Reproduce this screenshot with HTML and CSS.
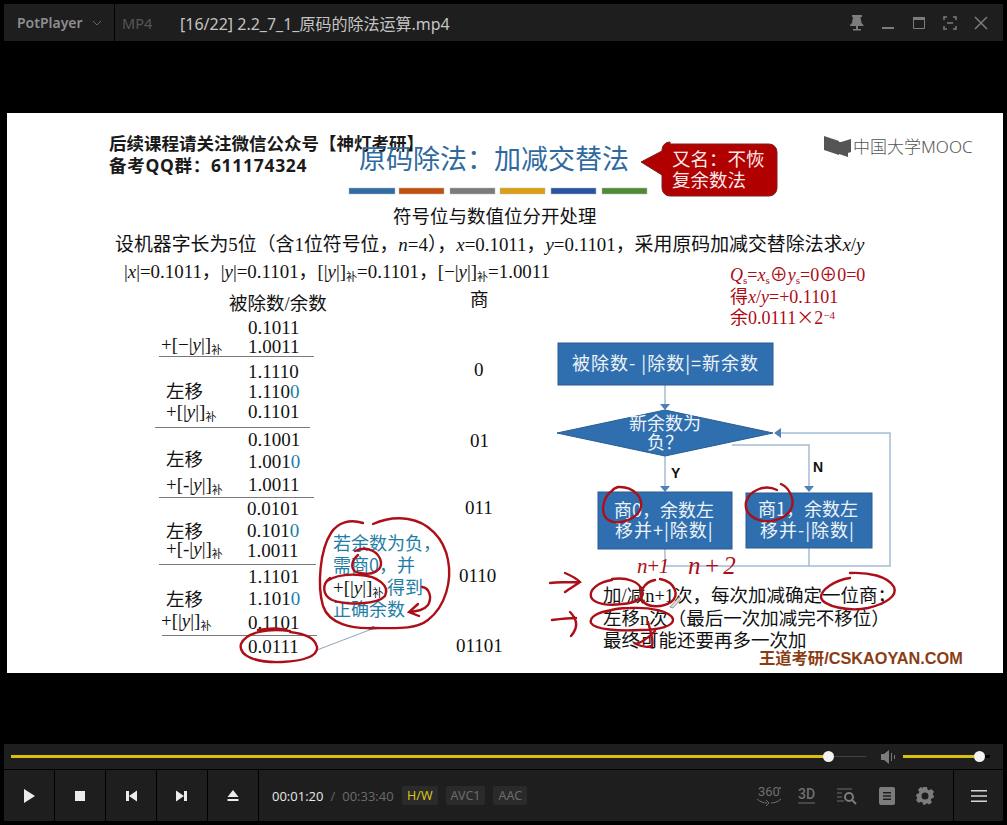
FILE: index.html
```html
<!DOCTYPE html>
<html>

<head>
    <meta charset="utf-8">
    <title>PotPlayer</title>
    <link rel="stylesheet" href="styles.css">
</head>

<body>
    <div class="titlebar">
        <div class="brand">PotPlayer
            <svg class="chevron" width="10" height="6" viewBox="0 0 10 6"><path d="M1 1l4 4 4-4" /></svg>
        </div>
        <div class="format">MP4</div>
        <div class="filename">[16/22] 2.2_7_1_原码的除法运算.mp4</div>
        <div class="win-buttons">
            <svg width="16" height="18" viewBox="0 0 16 18"><path class="fill" d="M3 1h10v2h-1.500l1 6 2 2v1H1v-1l2-2 1-6H3zM7 12h2v3h3v1.500H4V15h3z" /></svg>
            <svg width="16" height="18" viewBox="0 0 16 18"><path class="fill" d="M2 13h12v2H2z" /></svg>
            <svg width="16" height="18" viewBox="0 0 16 18"><path class="line" d="M2.500 3.500h11v11h-11z" /><path class="fill" d="M2 3h12v3H2z" /></svg>
            <svg width="16" height="18" viewBox="0 0 16 18"><path class="line thick" d="M2 6V3h3M11 3h3v3M14 12v3h-3M5 15H2v-3M5 9h6" /></svg>
            <svg width="16" height="18" viewBox="0 0 16 18"><path class="line thick" d="M2 3l12 12M14 3L2 15" /></svg>
        </div>
    </div>

    <div class="slide">
        <svg class="slide-canvas" width="996" height="560" viewBox="7 113 996 560">
            <!-- header -->
            <text class="notice" x="109" y="150">后续课程请关注微信公众号【神灯考研】</text>
            <text class="notice spaced" x="109" y="172">备考QQ群：611174324</text>
            <text class="title" x="359" y="169">原码除法：加减交替法</text>
            <rect class="bar" x="349" y="188" width="46" height="6" fill="#2f6ca6" />
            <rect class="bar" x="399" y="188" width="45" height="6" fill="#c2510f" />
            <rect class="bar" x="450" y="188" width="45" height="6" fill="#7b7b7b" />
            <rect class="bar" x="500" y="188" width="45" height="6" fill="#dd9f12" />
            <rect class="bar" x="551" y="188" width="45" height="6" fill="#2a52a2" />
            <rect class="bar" x="602" y="188" width="45" height="6" fill="#4f8b32" />

            <path class="callout" d="M670 144h99a8 8 0 0 1 8 8v36a8 8 0 0 1-8 8h-99a8 8 0 0 1-8-8v-13l-21-13 21-11v-1a8 8 0 0 1 8-8z" />
            <text class="callout-text" x="672" y="166">又名：不恢</text>
            <text class="callout-text" x="672" y="187">复余数法</text>

            <path class="mooc-icon" d="M824 136l15 5v14l-15-5zM841 142l10-3v13l-3 1v4l-9-3v-12z" />
            <text class="mooc" x="853" y="152.500">中国大学MOOC</text>

            <!-- problem -->
            <text class="body" x="393" y="223">符号位与数值位分开处理</text>
            <text class="body wide" x="115" y="251">设机器字长为5位（含1位符号位，<tspan class="em">n</tspan>=4），<tspan class="em">x</tspan>=0.1011，<tspan class="em">y</tspan>=0.1101，采用原码加减交替除法求<tspan class="em">x</tspan>/<tspan class="em">y</tspan></text>
            <text class="body wide" x="124" y="278">|<tspan class="em">x</tspan>|=0.1011，|<tspan class="em">y</tspan>|=0.1101，[|<tspan class="em">y</tspan>|]<tspan class="sub" dy="3">补</tspan><tspan dy="-3">=0.1101，[−|</tspan><tspan class="em">y</tspan>|]<tspan class="sub" dy="3">补</tspan><tspan dy="-3">=1.0011</tspan></text>

            <text class="red" x="730" y="281"><tspan class="em">Q</tspan><tspan class="sub-latin" dy="3">s</tspan><tspan dy="-3">=</tspan><tspan class="em">x</tspan><tspan class="sub-latin" dy="3">s</tspan><tspan dy="-3">⊕</tspan><tspan class="em">y</tspan><tspan class="sub-latin" dy="3">s</tspan><tspan dy="-3">=0⊕0=0</tspan></text>
            <text class="red" x="730" y="303">得<tspan class="em">x</tspan>/<tspan class="em">y</tspan>=+0.1101</text>
            <text class="red" x="730" y="324">余0.0111<tspan class="times">×</tspan>2<tspan class="sup" dy="-5">−4</tspan></text>

            <!-- division table -->
            <text class="body" x="229" y="310">被除数/余数</text>
            <text class="body" x="470" y="306">商</text>

            <text class="num" x="248" y="334">0.1011</text>
            <text class="num" x="248" y="353">1.0011</text>
            <path class="rule" d="M159 356.500h155" />
            <text class="num" x="248" y="378">1.1110</text>
            <text class="num" x="248" y="398">1.110<tspan class="teal">0</tspan></text>
            <text class="num" x="248" y="418">0.1101</text>
            <path class="rule" d="M155 427.500h155" />
            <text class="num" x="248" y="446">0.1001</text>
            <text class="num" x="248" y="468">1.001<tspan class="teal">0</tspan></text>
            <text class="num" x="248" y="491">1.0011</text>
            <path class="rule" d="M159 497.500h155" />
            <text class="num" x="247" y="515">0.0101</text>
            <text class="num" x="247" y="537">0.101<tspan class="teal">0</tspan></text>
            <text class="num" x="247" y="557">1.0011</text>
            <path class="rule" d="M159 564.500h157" />
            <text class="num" x="248" y="583">1.1101</text>
            <text class="num" x="248" y="605">1.101<tspan class="teal">0</tspan></text>
            <text class="num" x="248" y="629">0.1101</text>
            <path class="rule" d="M162 635.500h155" />
            <text class="num" x="248" y="653">0.0111</text>

            <text class="num" x="161" y="351">+[−|<tspan class="em">y</tspan>|]<tspan class="sub" dy="3">补</tspan></text>
            <text class="body" x="166" y="398">左移</text>
            <text class="num" x="166" y="418">+[|<tspan class="em">y</tspan>|]<tspan class="sub" dy="3">补</tspan></text>
            <text class="body" x="166" y="466">左移</text>
            <text class="num" x="166" y="491">+[-|<tspan class="em">y</tspan>|]<tspan class="sub" dy="3">补</tspan></text>
            <text class="body" x="166" y="538">左移</text>
            <text class="num" x="166" y="555">+[-|<tspan class="em">y</tspan>|]<tspan class="sub" dy="3">补</tspan></text>
            <text class="body" x="166" y="606">左移</text>
            <text class="num" x="161" y="627">+[|<tspan class="em">y</tspan>|]<tspan class="sub" dy="3">补</tspan></text>

            <text class="num" x="474" y="376">0</text>
            <text class="num" x="470" y="447">01</text>
            <text class="num" x="465" y="514">011</text>
            <text class="num" x="459" y="582">0110</text>
            <text class="num" x="456" y="652">01101</text>

            <!-- note -->
            <text class="note" x="333" y="550">若余数为负，</text>
            <text class="note" x="333" y="572">需商0，并</text>
            <text class="num" x="333" y="594">+[|<tspan class="em">y</tspan>|]<tspan class="sub" dy="3">补</tspan></text>
            <text class="note" x="387" y="594">得到</text>
            <text class="note" x="333" y="616">正确余数</text>
            <path class="leader" d="M317 650l55-21" />
            <path class="leader-head" d="M368 630l5-4 5 3z" />

            <!-- flowchart -->
            <path class="conn" d="M665 385v20M665 456v31M732 445h77v42M665 549v17h225V433H780M809 548v18" />
            <path class="conn-head" d="M660 404h10l-5 6zM660 486h10l-5 6zM804 486h10l-5 6zM774 433l7-5v10z" />
            <rect class="flow" x="558" y="343" width="215" height="42" />
            <path class="flow" d="M557 433l108-23 108 23-108 23z" />
            <rect class="flow" x="598" y="492" width="134" height="57" />
            <rect class="flow" x="746" y="493" width="126" height="55" />
            <text class="flow-text spread" x="665.500" y="370" text-anchor="middle">被除数- |除数|=新余数</text>
            <text class="flow-text" x="665" y="430" text-anchor="middle">新余数为</text>
            <text class="flow-text" x="665" y="449" text-anchor="middle">负？</text>
            <text class="flow-text" x="614" y="517">商0，余数左</text>
            <text class="flow-text spread" x="615" y="537">移并+|除数|</text>
            <text class="flow-text" x="758" y="516">商1，余数左</text>
            <text class="flow-text spread" x="760" y="537">移并-|除数|</text>
            <text class="yn" x="671" y="478">Y</text>
            <text class="yn" x="813" y="472">N</text>

            <!-- summary -->
            <text class="body" x="603" y="602">加/减n+1次，每次加减确定一位商；</text>
            <text class="body" x="603" y="625">左移n次（最后一次加减完不移位）</text>
            <text class="body" x="603" y="647">最终可能还要再多一次加</text>
            <text class="wangdao" x="759" y="664">王道考研/CSKAOYAN.COM</text>

            <!-- pen marks -->
            <text class="hand tight" x="637" y="573">n+1</text>
            <text class="hand loose" x="688" y="574">n+2</text>
            <path class="ink" d="M363 523C350 519 338 522 331 533C320 550 317 585 323 606C329 624 352 629 373 628C395 628 415 630 428 620C446 606 452 580 448 560C444 538 428 522 408 519C395 517 382 520 373 524" />
            <path class="ink" d="M358 555C350 562 350 572 360 573C373 576 382 570 381 562C379 552 368 545 355 551" />
            <path class="ink" d="M330 578C322 584 322 595 332 600C348 606 378 604 385 596C390 586 378 576 360 575C348 574 336 575 327 581" />
            <path class="ink" d="M422 587C430 588 432 598 428 605C424 610 418 611 410 612M418 604L409 612L419 616" />
            <path class="ink" d="M290 631C268 628 246 632 241 644C238 656 256 663 282 662C304 661 318 656 317 647C315 638 306 634 290 632M258 630C270 628 282 628 289 631" />
            <path class="ink" d="M613 490C603 496 600 512 607 519C616 526 634 521 640 510C645 498 633 486 618 487C615 488 613 489 612 491" />
            <path class="ink" d="M777 490C765 484 750 490 746 502C744 514 756 523 772 521C786 518 795 510 792 498C790 491 786 486 781 484" />
            <path class="ink" d="M550 583C560 582 570 582 580 582M565 573C572 576 577 579 580 582C574 586 569 589 565 592" />
            <path class="ink" d="M552 620C560 619 568 618 576 618M570 612C578 620 578 628 571 636" />
            <path class="ink" d="M612 580C598 582 589 590 591 597C594 604 608 606 622 604C636 603 645 598 642 590C639 582 628 577 612 579" />
            <path class="ink" d="M655 580C644 582 639 592 642 600C647 608 662 608 671 602C680 595 675 582 660 579" />
            <path class="ink" d="M850 578C835 580 820 590 821 598C824 606 848 612 868 608C885 604 898 596 894 587C888 576 868 572 850 573" />
            <path class="ink" d="M612 610C598 612 589 617 591 623C595 630 620 631 640 630C660 630 674 626 673 619C670 611 650 607 630 608C620 608 612 609 606 612" />
            <path class="ink" d="M648 622C650 630 654 640 652 646C646 648 640 646 636 644C644 642 650 636 655 631" />
            <path class="pen" d="M670 607l9-10 2 2-8 9z" />
        </svg>
    </div>

    <div class="controls">
        <div class="seek-row">
            <div class="seek-track">
                <div class="seek-fill"></div>
                <div class="knob"></div>
                <div class="seek-rest"></div>
            </div>
            <svg class="speaker" width="16" height="14" viewBox="0 0 16 14"><path d="M1 4h3l5-4v14l-5-4H1zM11 3h1v8h-1zM14 5h1v4h-1z" /></svg>
            <div class="volume-track">
                <div class="volume-fill"></div>
                <div class="knob"></div>
                <div class="volume-rest"></div>
            </div>
        </div>
        <div class="button-row">
            <div class="btn"><svg width="14" height="14" viewBox="0 0 14 14"><path d="M2 0l11 7-11 7z" /></svg></div>
            <div class="btn"><svg width="12" height="12" viewBox="0 0 12 12"><path d="M1 1h10v10H1z" /></svg></div>
            <div class="btn"><svg width="12" height="12" viewBox="0 0 12 12"><path d="M1 1h3v10H1zM4 6l8-5.500v11z" /></svg></div>
            <div class="btn"><svg width="12" height="12" viewBox="0 0 12 12"><path d="M0 .5L8 6l-8 5.500zM8 1h3v10H8z" /></svg></div>
            <div class="btn"><svg width="12" height="12" viewBox="0 0 12 12"><path d="M6 0l5.500 7H.5zM.5 9h11v2H.5z" /></svg></div>
            <div class="time"><span class="time-now">00:01:20</span><span class="time-sep">/</span><span class="time-total">00:33:40</span></div>
            <div class="tag tag-on">H/W</div>
            <div class="tag">AVC1</div>
            <div class="tag">AAC</div>
            <div class="tools">
                <svg class="tool-360" width="28" height="22" viewBox="0 0 28 22">
                    <text class="tool-label" x="3" y="11">360</text>
                    <path class="tool-line" d="M2 14c3 3 7 4 10 4M26 14c-3 3-7 4-10 4M11 15l3 3-3 3" />
                    <circle class="tool-dot" cx="25" cy="3" r="1" />
                </svg>
                <svg class="tool-3d" width="20" height="20" viewBox="0 0 20 20">
                    <text class="tool-label big" x="1" y="13">3D</text>
                    <path class="tool-line" d="M1 17h17" />
                </svg>
                <svg width="22" height="18" viewBox="0 0 22 18">
                    <path class="tool-line" d="M1 2h15M1 6h5M1 10h5M1 14h7" />
                    <circle class="tool-ring" cx="13" cy="10" r="4" />
                    <path class="tool-ring" d="M16 13l4 4" />
                </svg>
                <svg width="16" height="18" viewBox="0 0 16 18">
                    <path class="tool-solid" fill-rule="evenodd" d="M2 0h12a2 2 0 0 1 2 2v14a2 2 0 0 1-2 2H2a2 2 0 0 1-2-2V2a2 2 0 0 1 2-2zM4 5v1.500h8V5zM4 8.200v1.500h8V8.200zM4 11.400v1.500h8v-1.500z" />
                </svg>
                <svg width="18" height="18" viewBox="0 0 18 18">
                    <path class="tool-solid" fill-rule="evenodd" d="M7 0h4l.5 2.600 1.600.7L15.300 2l2.700 2.700-1.300 2.200.7 1.600L18 9v0l-.6 2-2 .4-.7 1.600 1.300 2.200-2.700 2.300-2.200-1.300-1.600.7L9 18 7 17.500l-.5-2.100-1.600-.7-2.200 1.300L0 13.300l1.300-2.200-.7-1.600L0 9l.6-2.100 2-.4.7-1.600L2 2.700 4.700 0l2 1.300zM9 5.500a3.500 3.500 0 1 0 0 7 3.500 3.500 0 0 0 0-7z" />
                </svg>
            </div>
            <div class="menu-btn">
                <svg width="16" height="14" viewBox="0 0 16 14"><path d="M0 1h16v1.500H0zM0 6.200h16v1.500H0zM0 11.500h16V13H0z" /></svg>
            </div>
        </div>
    </div>
</body>

</html>
```

FILE: styles.css
```css
body {
    margin: 0;
    padding: 4px;
    width: 999px;
    height: 817px;
    background-color: #000;
    font-family: "Noto Sans", "Noto Sans CJK SC", sans-serif;
    overflow: hidden;
}

/* title bar */
.titlebar {
    display: flex;
    align-items: center;
    height: 37px;
    background-color: #1e1e1e;
}

.brand {
    display: flex;
    align-items: center;
    gap: 9px;
    box-sizing: border-box;
    width: 111px;
    height: 100%;
    padding-left: 13px;
    border-right: 1px solid #000;
    color: #8e8e8e;
    font-size: 14px;
    font-weight: 600;
}

.chevron path {
    fill: none;
    stroke: #666;
    stroke-width: 1;
}

.format {
    width: 58px;
    padding-left: 7px;
    color: #565656;
    font-size: 14.5px;
}

.filename {
    flex: 1;
    color: #c4c4c4;
    font-size: 16px;
}

.win-buttons {
    display: flex;
    gap: 15px;
    align-items: center;
    padding-right: 14px;
}

.fill {
    fill: #7c7c7c;
}

.line {
    fill: none;
    stroke: #7c7c7c;
    stroke-width: 1;
}

.line.thick {
    stroke-width: 1.5;
}

/* slide */
.slide {
    margin: 72px 0 71px 3px;
    width: 996px;
    height: 560px;
    background-color: #fff;
}

.slide-canvas {
    display: block;
    font-family: "Liberation Serif", "Noto Sans CJK SC", serif;
}

.notice {
    font-family: "Noto Sans", "Noto Sans CJK SC", sans-serif;
    font-size: 17.500px;
    font-weight: 700;
    fill: #1a1a1a;
}

.notice.spaced {
    letter-spacing: 0.7px;
}

.title {
    font-family: "Noto Sans CJK SC", sans-serif;
    font-size: 27px;
    fill: #2f6a9f;
}

.bar {
    stroke: #b8b8b8;
    stroke-width: 0.5;
}

.callout {
    fill: #b00000;
    stroke: #7c2020;
    stroke-width: 1;
}

.callout-text {
    font-family: "Noto Sans CJK SC", sans-serif;
    font-size: 18.5px;
    fill: #fbeaea;
}

.mooc-icon {
    fill: #555;
}

.mooc {
    font-family: "Noto Sans", "Noto Sans CJK SC", sans-serif;
    font-size: 17px;
    font-weight: 300;
    fill: #555;
}

.body {
    font-size: 18.5px;
    fill: #111;
}

.body.wide {
    font-size: 18.900px;
}

.em {
    font-style: italic;
}

.sub {
    font-size: 11px;
}

.sub-latin {
    font-size: 11px;
}

.sup {
    font-size: 11px;
}

.times {
    font-family: "Noto Sans CJK SC", sans-serif;
}

.red {
    font-size: 18px;
    fill: #ad0a16;
}

.num {
    font-size: 19px;
    fill: #111;
}

.teal {
    fill: #1c7ea8;
}

.rule {
    stroke: #7a7a7a;
    stroke-width: 1;
}

.note {
    font-family: "Noto Sans CJK SC", sans-serif;
    font-size: 18px;
    fill: #1f7ea6;
}

.leader {
    stroke: #8fa3bd;
    stroke-width: 1;
}

.leader-head {
    fill: #4a6a96;
}

.conn {
    fill: none;
    stroke: #a3bdd4;
    stroke-width: 1.5;
}

.conn-head {
    fill: #4f81b5;
}

.flow {
    fill: #2f6fb0;
    stroke: #2a5d90;
    stroke-width: 1;
}

.flow-text {
    font-family: "Noto Sans CJK SC", sans-serif;
    font-size: 18px;
    fill: #eef3f8;
}

.flow-text.spread {
    letter-spacing: 1px;
}

.yn {
    font-family: "Liberation Sans", sans-serif;
    font-size: 14px;
    font-weight: 700;
    fill: #111;
}

.wangdao {
    font-family: "Liberation Sans", "Noto Sans CJK SC", sans-serif;
    font-size: 16.300px;
    font-weight: 700;
    fill: #8a3d14;
}

.hand {
    font-size: 24px;
    font-style: italic;
    fill: #ad0f18;
}

.hand.tight {
    font-size: 21px;
    letter-spacing: -1.500px;
}

.hand.loose {
    font-size: 25px;
    letter-spacing: 3px;
}

.ink {
    fill: none;
    stroke: #ad0f18;
    stroke-width: 2.4;
    stroke-linecap: round;
}

.pen {
    fill: #ddd;
    stroke: #777;
    stroke-width: 0.7;
}

/* bottom controls */
.controls {
    height: 77px;
    background-color: #1e1e1e;
}

.seek-row {
    display: flex;
    align-items: center;
    box-sizing: border-box;
    height: 26px;
    padding: 0 13px 0 7px;
    border-bottom: 1px solid #000;
}

.seek-track {
    display: flex;
    align-items: center;
    width: 857px;
}

.seek-fill {
    width: 817px;
    height: 3px;
    background-color: #d8bf12;
}

.knob {
    flex: none;
    width: 11px;
    height: 11px;
    margin-left: -5px;
    border-radius: 50%;
    background-color: #f2f2f2;
}

.seek-rest {
    flex: 1;
    height: 1px;
    background-color: #444;
}

.speaker {
    margin-left: 14px;
    fill: #7c7c7c;
}

.volume-track {
    display: flex;
    align-items: center;
    width: 87px;
    margin-left: 7px;
}

.volume-fill {
    width: 76px;
    height: 3px;
    background-color: #d8bf12;
}

.volume-rest {
    flex: 1;
    height: 3px;
    background-color: #000;
}

.button-row {
    display: flex;
    align-items: center;
    height: 51px;
}

.btn {
    display: flex;
    align-items: center;
    justify-content: center;
    box-sizing: border-box;
    width: 51px;
    height: 100%;
    border-right: 1px solid #000;
    fill: #ececec;
}

.time {
    width: 135px;
    padding-left: 13px;
    box-sizing: border-box;
    font-family: "Open Sans", sans-serif;
    font-size: 13px;
    white-space: nowrap;
}

.time-now {
    color: #e8e8e8;
}

.time-sep {
    margin: 0 7px;
    color: #666;
}

.time-total {
    color: #6c6c6c;
}

.tag {
    margin-left: 8px;
    padding: 1px 5px;
    border-radius: 2px;
    background-color: #2a2a2a;
    color: #6c6c6c;
    font-size: 12.500px;
}

.tag-on {
    margin-left: 8px;
    color: #d9c41e;
}

.tools {
    display: flex;
    flex: 1;
    align-items: center;
    justify-content: flex-end;
    gap: 21px;
    padding-right: 19px;
}

.tool-360 {
    margin-right: -7px;
}

.tool-3d {
    margin-right: -2px;
}

.tool-label {
    font-family: "Roboto", sans-serif;
    font-size: 13px;
    fill: #6e6e6e;
}

.tool-label.big {
    font-size: 14px;
    font-weight: 500;
}

.tool-line {
    fill: none;
    stroke: #6e6e6e;
    stroke-width: 1;
}

.tool-dot {
    fill: #6e6e6e;
}

.tool-ring {
    fill: none;
    stroke: #7c7c7c;
    stroke-width: 2;
}

.tool-solid {
    fill: #7c7c7c;
}

.menu-btn {
    display: flex;
    align-items: center;
    justify-content: center;
    box-sizing: border-box;
    width: 50px;
    height: 100%;
    border-left: 1px solid #000;
    fill: #d8d8d8;
}
```
